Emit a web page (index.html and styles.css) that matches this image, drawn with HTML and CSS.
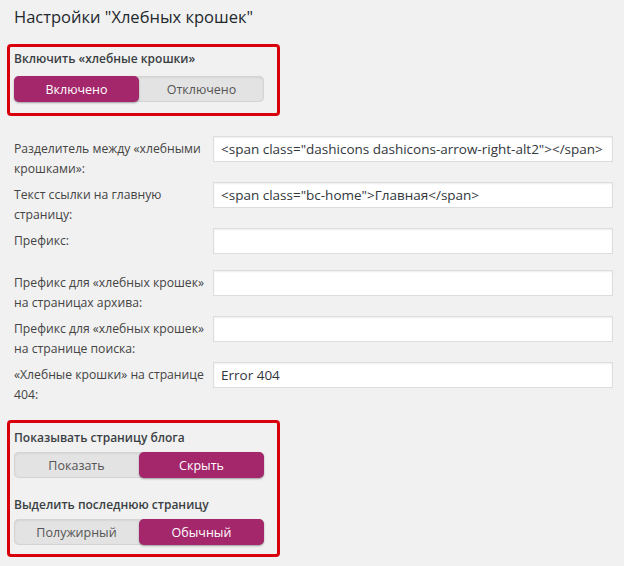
FILE: index.html
```html
<!DOCTYPE html>
<html lang="ru">
<head>
    <meta charset="UTF-8">
    <title>Настройки "Хлебных крошек"</title>
    <link rel="stylesheet" href="styles.css">
</head>
<body>
    <div class="wrap">
        <h2 class="page-title">Настройки "Хлебных крошек"</h2>

        <div class="highlight highlight-top">
            <div class="group-label">Включить «хлебные крошки»</div>
            <div class="switch">
                <span class="switch-btn active">Включено</span>
                <span class="switch-btn">Отключено</span>
            </div>
        </div>

        <div class="form-table">
            <div class="row">
                <label class="row-label">Разделитель между «хлебными<br>крошками»:</label>
                <input type="text" class="text-field" value='<span class="dashicons dashicons-arrow-right-alt2"></span>'>
            </div>
            <div class="row">
                <label class="row-label">Текст ссылки на главную<br>страницу:</label>
                <input type="text" class="text-field" value='<span class="bc-home">Главная</span>'>
            </div>
            <div class="row">
                <label class="row-label">Префикс:</label>
                <input type="text" class="text-field" value="">
            </div>
            <div class="row">
                <label class="row-label">Префикс для «хлебных крошек»<br>на страницах архива:</label>
                <input type="text" class="text-field" value="">
            </div>
            <div class="row">
                <label class="row-label">Префикс для «хлебных крошек»<br>на странице поиска:</label>
                <input type="text" class="text-field" value="">
            </div>
            <div class="row">
                <label class="row-label">«Хлебные крошки» на странице<br>404:</label>
                <input type="text" class="text-field" value="Error 404">
            </div>
        </div>

        <div class="highlight highlight-bottom">
            <div class="group-label">Показывать страницу блога</div>
            <div class="switch">
                <span class="switch-btn">Показать</span>
                <span class="switch-btn active">Скрыть</span>
            </div>
            <div class="group-label second">Выделить последнюю страницу</div>
            <div class="switch">
                <span class="switch-btn">Полужирный</span>
                <span class="switch-btn active">Обычный</span>
            </div>
        </div>
    </div>
</body>
</html>
```

FILE: styles.css
```css
body {
    margin: 0;
    background-color: #f1f1f1;
    font-family: "Open Sans", "Noto Sans", sans-serif;
    font-size: 12.5px;
    color: #444;
}

.wrap {
    padding: 5px 11px 0 7px;
}

.page-title {
    margin: 0 0 15px 7px;
    font-size: 16.5px;
    font-weight: 400;
    line-height: 24px;
    color: #23282d;
}

.highlight {
    width: 273px;
    box-sizing: border-box;
    border: 3px solid #d9000d;
    border-radius: 4px;
    padding: 2px 4px 11px 4px;
}

.highlight-bottom {
    margin-top: 12px;
    padding-top: 5px;
    padding-bottom: 9px;
}

.group-label {
    font-size: 12px;
    font-weight: 600;
    line-height: 20px;
    color: #3a3f44;
}

.highlight-top .switch {
    margin-top: 7px;
}

.highlight-bottom .switch {
    margin-top: 4px;
}

.group-label.second {
    margin-top: 17px;
}

.switch {
    display: flex;
    width: 250px;
    height: 26px;
    background: #e3e3e3;
    border-radius: 5px;
    box-shadow: inset 0 0 0 1px #d4d4d4, inset 0 1px 3px rgba(0,0,0,0.12);
}

.switch-btn {
    flex: 1;
    display: flex;
    align-items: center;
    justify-content: center;
    color: #555;
    border-radius: 5px;
}

.switch-btn.active {
    background: #a4266b;
    color: #fff;
    box-shadow: 0 1px 2px rgba(0,0,0,0.35);
}

.form-table {
    margin-top: 20px;
    padding-left: 7px;
}

.row {
    display: grid;
    grid-template-columns: 199px 400px;
    align-items: start;
}

.row-label {
    padding: 3px 0;
    font-size: 12.2px;
    line-height: 20px;
    white-space: nowrap;
}

.text-field {
    height: 26px;
    box-sizing: border-box;
    margin: 0 0 16px 0;
    padding: 0 7px;
    border: 1px solid #ddd;
    background: #fff;
    box-shadow: inset 0 1px 2px rgba(0,0,0,0.07);
    font-family: "Open Sans", "Noto Sans", sans-serif;
    font-size: 13.5px;
    color: #32373c;
}
```
